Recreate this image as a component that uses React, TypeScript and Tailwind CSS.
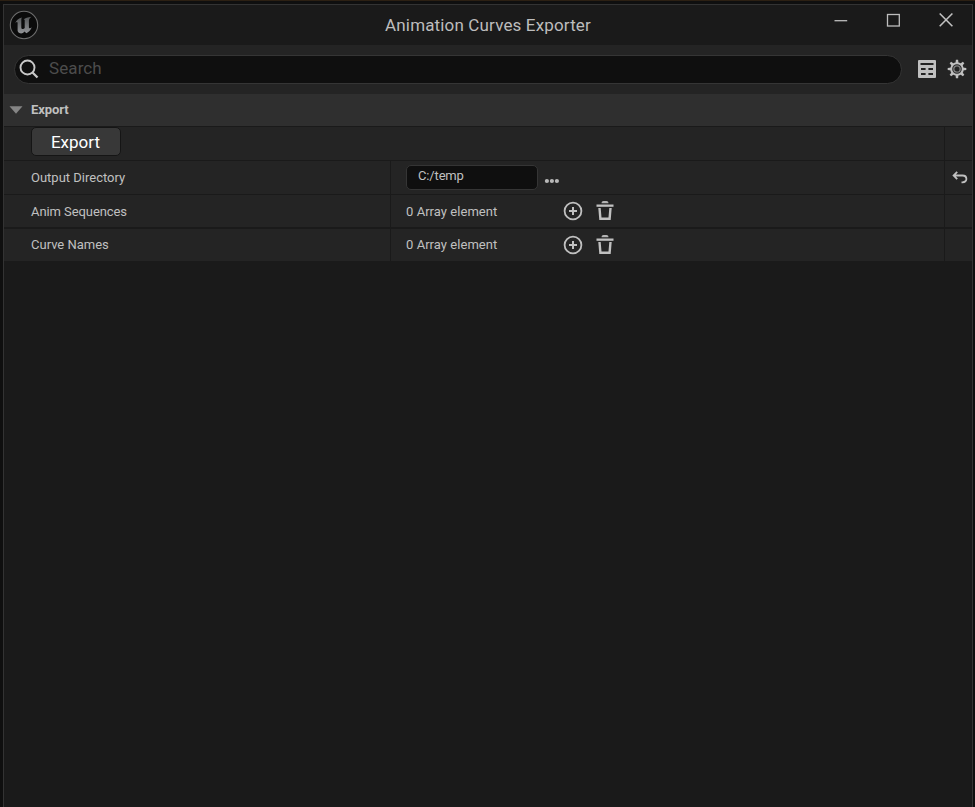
import React from "react";

function UnrealLogo() {
  return (
    <svg width="30" height="30" viewBox="0 0 30 30" className="shrink-0">
      <defs>
        <linearGradient id="metal" x1="0" y1="0" x2="0" y2="1">
          <stop offset="0" stopColor="#56585a" />
          <stop offset="1" stopColor="#929497" />
        </linearGradient>
      </defs>
      <circle cx="15" cy="15" r="13.7" fill="#0b0b0b" stroke="#6d6d6d" strokeWidth="1.1" />
      <path
        d="M6.2 13.2C7.3 10.2 9.6 8.2 13 7.4C12.5 8 12.3 8.6 12.3 9.4V17.4C12.3 19.2 14.6 19.5 15.7 18V10.2C15.7 9.5 15.3 9.3 14.6 9.5C16.3 8.2 18.6 7.3 22.5 6.8C20.6 8.3 19.9 9.2 19.9 10.8V17.5C19.9 18.7 21.7 18.4 22.8 17.3C21.7 20.3 19.6 22.3 17.3 23.3L15.6 21.5C13.7 23.8 11.2 24.2 8.9 22C10 22.2 8.6 21.8 8.6 20.4V13.1C8.6 11.5 7.3 12.1 6.2 13.2Z"
        fill="url(#metal)"
      />
    </svg>
  );
}

function WindowControls() {
  return (
    <div className="flex h-5 items-center gap-[37px] pr-[18px]">
      <svg width="16" height="16" viewBox="0 0 16 16" stroke="#bdbdbd" strokeWidth="1.3">
        <path d="M2.5 8.7H15.2" />
      </svg>
      <svg width="16" height="16" viewBox="0 0 16 16" fill="none" stroke="#bdbdbd" strokeWidth="1.3">
        <rect x="2.5" y="2.5" width="11.8" height="11.5" />
      </svg>
      <svg width="16" height="16" viewBox="0 0 16 16" stroke="#c0c0c0" strokeWidth="1.6">
        <path d="M1.7 1.5L14.4 14.2M14.4 1.5L1.7 14.2" />
      </svg>
    </div>
  );
}

function TableIcon() {
  return (
    <svg width="18" height="18" viewBox="0 0 18 18">
      <rect width="18" height="18" rx="1" fill="#c0c0c0" />
      <path
        d="M2.5 3H15.5V5H2.5ZM3 8.1H7.6V10H3ZM10.4 8.1H15V10H10.4ZM3 13H7.6V14.9H3ZM10.4 13H15V14.9H10.4Z"
        fill="#242424"
      />
    </svg>
  );
}

function GearIcon() {
  const teeth = [0, 45, 90, 135, 180, 225, 270, 315];
  return (
    <svg width="20" height="20" viewBox="0 0 20 20">
      {teeth.map((a) => (
        <path key={a} d="M8.5 4.5L8.9 .7H11.1L11.5 4.5Z" fill="#c0c0c0" transform={`rotate(${a} 10 10)`} />
      ))}
      <circle cx="10" cy="10" r="5.8" fill="#242424" stroke="#c0c0c0" strokeWidth="2" />
      <circle cx="10" cy="10" r="3.2" fill="none" stroke="#808080" strokeWidth="1.3" />
    </svg>
  );
}

function AddIcon() {
  return (
    <svg width="20" height="20" viewBox="0 0 20 20" fill="none" stroke="#c0c0c0">
      <circle cx="10" cy="10" r="8.400" strokeWidth="1.800" />
      <path d="M10 6V14M6 10H14" strokeWidth="2" />
    </svg>
  );
}

function TrashIcon() {
  return (
    <svg width="20" height="20" viewBox="0 0 20 20" fill="none">
      <path d="M6.5 2.3C6.500 .8 7.500 .1 8.500 .1H11.500C12.500 .1 13.500 .8 13.500 2.300Z" fill="#b4b4b4" />
      <rect x="1.500" y="3.500" width="17" height="2.300" fill="#c0c0c0" />
      <path d="M4.500 7L5.400 17.700H14.600L15.500 7" stroke="#c0c0c0" strokeWidth="2.400" />
    </svg>
  );
}

function Row({ label, children, reset }: { label: React.ReactNode; children: React.ReactNode; reset?: boolean }) {
  return (
    <div className="flex h-full bg-[#242424]">
      <div className="flex w-[386px] items-center pl-[27px] text-[13px]">{label}</div>
      <div className="flex flex-1 items-center border-l border-[#1a1a1a] pl-[15px] text-[13px]">{children}</div>
      <div className="flex w-[28px] items-center border-l border-[#1a1a1a] pl-[7px]">
        {reset && (
          <svg width="18" height="14" viewBox="0 0 18 14" fill="none" stroke="#c0c0c0" strokeWidth="1.8">
            <path d="M5.2 .9L1.6 4.5L5.2 8.2M1.6 4.5H10.5C15.7 4.5 15.7 11.3 10.5 11.3H9.5" />
          </svg>
        )}
      </div>
    </div>
  );
}

function ArrayValue({ textClass = "" }: { textClass?: string }) {
  return (
    <>
      <span className={`w-[157px] tracking-[0.05px] ${textClass}`}>0 Array element</span>
      <AddIcon />
      <span className="w-3" />
      <TrashIcon />
    </>
  );
}

export default function App() {
  return (
    <div className="h-[807px] w-[975px] overflow-hidden border-t border-[#2c2013] bg-[#0f0f0f] pl-[3px] pr-[2px] pt-[3px] font-['Roboto',sans-serif] text-[#c0c0c0]">
      <div className="flex h-[803px] flex-col border-x border-t border-[#333333] bg-[#1a1a1a]">
        <header className="flex h-10 shrink-0 items-start">
          <div className="flex w-[140px] pl-[5px] pt-[5px]">
            <UnrealLogo />
          </div>
          <h1 className="flex-1 pt-2 text-center text-[17px] leading-6 tracking-[0.15px] text-[#bdbdbd]">
            Animation Curves Exporter
          </h1>
          <div className="flex w-[140px] justify-end pt-[5px]">
            <WindowControls />
          </div>
        </header>
        <div className="flex h-[49px] shrink-0 items-center bg-[#242424] pl-[10px] pr-[5px]">
          <div className="flex h-[29px] w-[888px] items-center rounded-full border border-[#353535] bg-[#0f0f0f] pb-[2px] pl-[4px]">
            <svg width="20" height="20" viewBox="0 0 20 20" fill="none" stroke="#c8c8c8" strokeWidth="1.9">
              <circle cx="8.5" cy="8.5" r="7" />
              <path d="M13.5 13.5L18.5 18.5" strokeWidth="2.3" />
            </svg>
            <span className="pl-[10px] text-[17px] leading-none tracking-[0.1px] text-[#4c4c4c]">Search</span>
          </div>
          <div className="ml-4 flex items-center gap-[11px] pb-[2px]">
            <TableIcon />
            <GearIcon />
          </div>
        </div>
        <div className="flex h-8 shrink-0 items-center bg-[#2f2f2f] pl-[5px]">
          <svg width="14" height="8" viewBox="0 0 14 8">
            <path d="M.5 .3H13.5L7 7.7Z" fill="#858585" />
          </svg>
          <span className="pl-2 text-[13px] font-bold tracking-[-0.08px]">Export</span>
        </div>
        <main className="grid shrink-0 grid-rows-[33px_33px_32px_33px] gap-y-px bg-[#1a1a1a] pt-px">
          <div className="flex bg-[#242424] pl-[27px]">
            <button className="h-[29px] w-[90px] rounded-[5px] border border-[#151515] bg-[#383838] pr-px pt-[2px] text-[17px] leading-none text-white">
              Export
            </button>
            <div className="flex-1" />
            <div className="w-[28px] border-l border-[#1a1a1a]" />
          </div>
          <Row label="Output Directory" reset>
            <span className="flex h-[25px] w-[132px] items-center rounded-[5px] border border-[#353535] bg-[#0f0f0f] pb-[3px] pl-[11px] tracking-[-0.15px]">
              C:/temp
            </span>
            <svg className="ml-[6px] mt-[7px]" width="16" height="6" viewBox="0 0 16 6" fill="#b8b8b8">
              <circle cx="2.9" cy="3" r="2.1" />
              <circle cx="7.9" cy="3" r="2.1" />
              <circle cx="12.9" cy="3" r="2.1" />
            </svg>
          </Row>
          <Row label={<span className="pt-[2px] tracking-[-0.08px]">Anim Sequences</span>}>
            <ArrayValue textClass="pt-[2px]" />
          </Row>
          <div className="pt-px">
            <Row label="Curve Names">
              <ArrayValue />
            </Row>
          </div>
        </main>
      </div>
    </div>
  );
}
